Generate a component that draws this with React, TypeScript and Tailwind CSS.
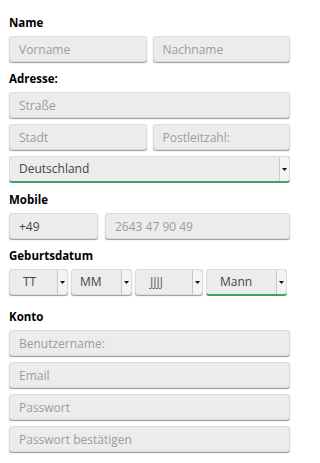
const font = { fontFamily: '"Open Sans", "Liberation Sans", sans-serif' };

const inputCls =
  "h-[26px] min-w-0 rounded-[3px] border border-[#dcdcdc] bg-[#ececec] px-[9px] text-[12px] text-[#444] shadow-[0_1px_1px_rgba(0,0,0,0.4)] outline-none placeholder:text-[#9c9c9c]";

function Label({ children, className = "" }: { children: React.ReactNode; className?: string }) {
  return (
    <div className={`mb-[6px] text-[11.5px] font-bold leading-[14px] text-black ${className}`}>
      {children}
    </div>
  );
}

function Field({ placeholder, value, width = "w-full" }: { placeholder: string; value?: string; width?: string }) {
  return (
    <input
      className={`${inputCls} ${width}`}
      placeholder={placeholder}
      defaultValue={value}
    />
  );
}

function Arrow() {
  return (
    <div className="flex h-full w-[10px] shrink-0 items-center justify-center border-l border-[#c8c8c8] bg-[#f4f4f4] shadow-[1px_0_1px_rgba(0,0,0,0.45)]">
      <svg width="5" height="3" viewBox="0 0 5 3">
        <path d="M0 0h5L2.5 3z" fill="#111" />
      </svg>
    </div>
  );
}

function Select({
  text,
  width,
  pad,
  green = false,
  muted = false,
}: {
  text: string;
  width: string;
  pad: string;
  green?: boolean;
  muted?: boolean;
}) {
  return (
    <div
      className={`flex h-[26px] ${width} shrink-0 items-stretch overflow-hidden rounded-[3px] border border-[#dcdcdc] bg-[#ececec] ${
        green
          ? "border-b-[#3fa363] shadow-[0_1px_0_#3fa363]"
          : "shadow-[0_1px_1px_rgba(0,0,0,0.4)]"
      }`}
    >
      <div className={`flex flex-1 items-center ${pad} text-[12px] ${muted ? "text-[#666]" : "text-[#444]"}`}>
        {text}
      </div>
      <Arrow />
    </div>
  );
}

export default function App() {
  return (
    <div className="min-h-[463px] w-[300px] overflow-hidden bg-white pl-[9px] pr-[10px] pt-[16px]" style={font}>
      <Label>Name</Label>
      <div className="flex gap-[6px]">
        <Field placeholder="Vorname" />
        <Field placeholder="Nachname" />
      </div>

      <Label className="mt-[10px]">Adresse:</Label>
      <div className="flex flex-col gap-[6px]">
        <Field placeholder="Straße" />
        <div className="flex gap-[6px]">
          <Field placeholder="Stadt" />
          <Field placeholder="Postleitzahl:" />
        </div>
        <Select text="Deutschland" width="w-full" pad="pl-[9px]" green />
      </div>

      <Label className="mt-[11px]">Mobile</Label>
      <div className="flex gap-[7px]">
        <Field value="+49" placeholder="" width="w-[89px] shrink-0" />
        <Field placeholder="2643 47 90 49" width="flex-1" />
      </div>

      <Label className="mt-[10px]">Geburtsdatum</Label>
      <div className="flex gap-[3px]">
        <Select text="TT" width="w-[59px]" pad="pl-[13px]" />
        <Select text="MM" width="w-[61px]" pad="pl-[8px]" />
        <Select text="JJJJ" width="w-[68px]" pad="pl-[14px]" muted />
        <Select text="Mann" width="w-[81px]" pad="pl-[13px]" green />
      </div>

      <Label className="mt-[15px]">Konto</Label>
      <div className="flex flex-col gap-[6px]">
        <Field placeholder="Benutzername:" />
        <Field placeholder="Email" />
        <Field placeholder="Passwort" />
        <Field placeholder="Passwort bestätigen" />
      </div>
    </div>
  );
}
